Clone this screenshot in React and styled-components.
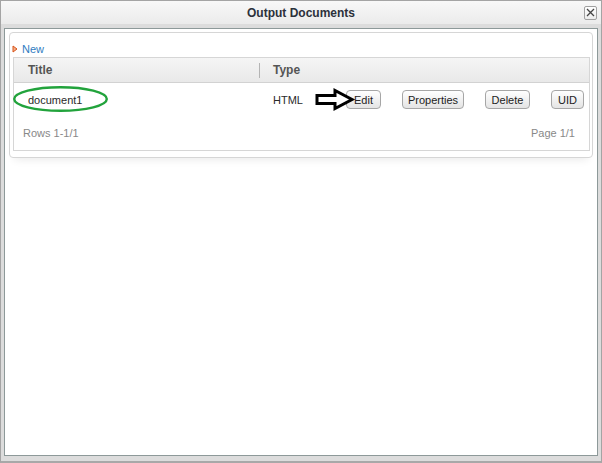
import React from 'react';
import styled, { createGlobalStyle } from 'styled-components';

const GlobalStyle = createGlobalStyle`
  body {
    margin: 0;
    background: #ffffff;
    font-family: "Liberation Sans", Arial, sans-serif;
  }
`;

const Window = styled.div`
  width: 602px;
  height: 463px;
  box-sizing: border-box;
  border: 1px solid #a4a4a4;
  border-bottom: 2px solid #a8a8a8;
  background: #dcdcdc;
  display: flex;
  flex-direction: column;
`;

const TitleBar = styled.div`
  height: 23px;
  flex: none;
  display: grid;
  grid-template-columns: 1fr auto 1fr;
  align-items: center;
  background: linear-gradient(#f8f8f8, #ebebeb);
`;

const Title = styled.div`
  grid-column: 2;
  font-size: 12px;
  font-weight: 700;
  color: #2c313b;
`;

const CloseButton = styled.button`
  grid-column: 3;
  justify-self: end;
  margin-right: 4px;
  width: 13px;
  height: 14px;
  padding: 0;
  border: 1px solid #a0a0a0;
  border-radius: 2px;
  background: linear-gradient(#ffffff, #ececec);
  display: flex;
  align-items: center;
  justify-content: center;
`;

const Frame = styled.div`
  flex: 1;
  display: flex;
  padding: 4px 3px 5px 3px;
`;

const Panel = styled.div`
  flex: 1;
  border: 1px solid #8d9999;
  background: #ffffff;
  padding: 3px 4px 0 4px;
`;

const Card = styled.div`
  border: 1px solid #d6d6d6;
  border-radius: 4px;
  padding: 8px 2px 6px 3px;
  box-shadow: 0 7px 8px -5px rgba(0, 0, 0, 0.08);
`;

const NewLink = styled.a`
  display: flex;
  align-items: center;
  gap: 4px;
  height: 15px;
  margin-left: -1px;
  margin-bottom: 1px;
  font-size: 11px;
  color: #2f7cc1;
  text-decoration: none;
`;

const Table = styled.div`
  border: 1px solid #d6d6d6;
`;

const Header = styled.div`
  height: 24px;
  display: flex;
  align-items: center;
  border-bottom: 1px solid #d2d2d2;
  background: linear-gradient(#f5f5f5, #e9e9e9);
`;

const HeadCell = styled.div`
  width: ${p => p.$width || 'auto'};
  padding-left: ${p => p.$pad}px;
  box-sizing: border-box;
  font-size: 12px;
  font-weight: 700;
  color: #555555;
`;

const HeadDivider = styled.div`
  width: 1px;
  height: 15px;
  background: #b4b4b4;
`;

const Row = styled.div`
  position: relative;
  height: 33px;
  display: flex;
  align-items: center;
`;

const Cell = styled.div`
  width: ${p => p.$width}px;
  padding-left: ${p => p.$pad || 0}px;
  box-sizing: border-box;
  font-size: 11px;
  color: #2a2a2a;
`;

const Actions = styled.div`
  display: flex;
  gap: 21px;
`;

const Button = styled.button`
  width: ${p => p.$width}px;
  height: 19px;
  padding: 0;
  border: 1px solid #a6a6a6;
  border-radius: 4px;
  background: linear-gradient(#ffffff, #e4e4e4);
  font-family: "Liberation Sans", Arial, sans-serif;
  font-size: 11px;
  color: #222222;
`;

const Annotation = styled.svg`
  position: absolute;
  left: ${p => p.$left}px;
  top: ${p => p.$top}px;
  overflow: visible;
`;

const Footer = styled.div`
  height: 34px;
  display: flex;
  align-items: center;
  justify-content: space-between;
  padding: 0 14px 0 9px;
  font-size: 11px;
  color: #888888;
`;

const buttons = [
  { label: 'Edit', width: 35 },
  { label: 'Properties', width: 62 },
  { label: 'Delete', width: 45 },
  { label: 'UID', width: 33 },
];

export default function App() {
  return (
    <>
      <GlobalStyle />
      <Window>
        <TitleBar>
          <Title>Output Documents</Title>
          <CloseButton aria-label="close">
            <svg width="9" height="9" viewBox="0 0 9 9">
              <path d="M1 1 L8 8 M8 1 L1 8" stroke="#444" strokeWidth="1.3" />
            </svg>
          </CloseButton>
        </TitleBar>
        <Frame>
          <Panel>
            <Card>
              <NewLink href="#">
                <svg width="6" height="8" viewBox="0 0 6 8">
                  <path d="M1 1 L5 4 L1 7 Z" fill="#f3b08a" stroke="#d9541a" strokeWidth="1" />
                </svg>
                New
              </NewLink>
              <Table>
                <Header>
                  <HeadCell $width="245px" $pad={14}>Title</HeadCell>
                  <HeadDivider />
                  <HeadCell $pad={13}>Type</HeadCell>
                </Header>
                <Row>
                  <Cell $width={259} $pad={14}>document1</Cell>
                  <Cell $width={73}>HTML</Cell>
                  <Actions>
                    {buttons.map(b => (
                      <Button key={b.label} $width={b.width}>{b.label}</Button>
                    ))}
                  </Actions>
                  <Annotation $left={-1} $top={3} width="95" height="26">
                    <ellipse cx="47.5" cy="13" rx="46.3" ry="11.8" fill="none" stroke="#22a33c" strokeWidth="2.4" />
                  </Annotation>
                  <Annotation $left={301} $top={6} width="40" height="22">
                    <path d="M2 6.5 H20 V1.5 L37 10.5 L20 19.5 V14.5 H2 Z" fill="#ffffff" stroke="#000000" strokeWidth="3" strokeLinejoin="miter" />
                  </Annotation>
                </Row>
                <Footer>
                  <span>Rows 1-1/1</span>
                  <span>Page 1/1</span>
                </Footer>
              </Table>
            </Card>
          </Panel>
        </Frame>
      </Window>
    </>
  );
}
